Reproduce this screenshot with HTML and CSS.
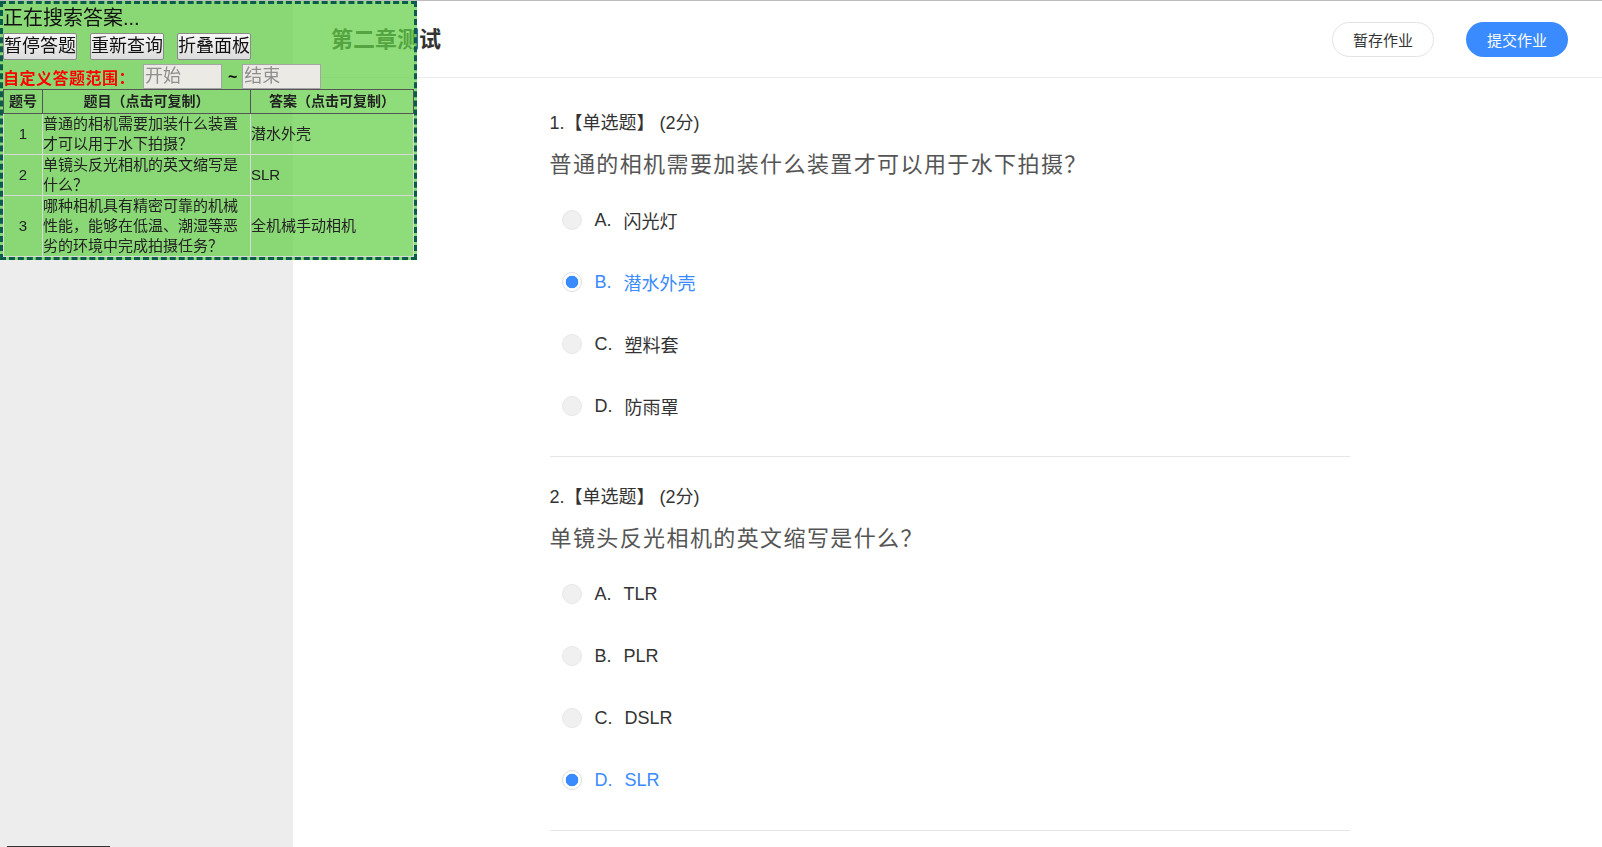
FILE: index.html
```html
<!DOCTYPE html>
<html lang="zh-CN">
<head>
  <meta charset="UTF-8" />
  <meta name="viewport" content="width=device-width, initial-scale=1.0" />
  <title>第二章测试</title>
  <link rel="stylesheet" href="styles.css">
</head>
<body>
  <div class="page">
    <aside class="sidebar">
      <div class="side-tab"></div>
    </aside>

    <div class="main">
      <header class="topbar">
        <h1 class="work-title">第二章测试</h1>
        <div class="topbar-actions">
          <button class="btn-ghost">暂存作业</button>
          <button class="btn-primary">提交作业</button>
        </div>
      </header>

      <main class="paper">
        <div class="question">
          <div class="q-type">1.【单选题】 (2分)</div>
          <div class="q-text">普通的相机需要加装什么装置才可以用于水下拍摄？</div>
          <ul class="options">
            <li class="option"><span class="radio"></span><span class="opt-key">A.</span><span>闪光灯</span></li>
            <li class="option checked"><span class="radio"></span><span class="opt-key">B.</span><span>潜水外壳</span></li>
            <li class="option"><span class="radio"></span><span class="opt-key">C.</span><span>塑料套</span></li>
            <li class="option"><span class="radio"></span><span class="opt-key">D.</span><span>防雨罩</span></li>
          </ul>
        </div>

        <div class="question">
          <div class="q-type">2.【单选题】 (2分)</div>
          <div class="q-text">单镜头反光相机的英文缩写是什么？</div>
          <ul class="options">
            <li class="option"><span class="radio"></span><span class="opt-key">A.</span><span>TLR</span></li>
            <li class="option"><span class="radio"></span><span class="opt-key">B.</span><span>PLR</span></li>
            <li class="option"><span class="radio"></span><span class="opt-key">C.</span><span>DSLR</span></li>
            <li class="option checked"><span class="radio"></span><span class="opt-key">D.</span><span>SLR</span></li>
          </ul>
        </div>
      </main>
    </div>
  </div>

  <div class="helper-panel">
    <div class="status">正在搜索答案...</div>
    <div class="panel-btns">
      <button>暂停答题</button>
      <button>重新查询</button>
      <button>折叠面板</button>
    </div>
    <div class="range-row">
      <span class="range-label">自定义答题范围：</span>
      <input type="text" placeholder="开始">
      <span class="tilde">~</span>
      <input type="text" placeholder="结束">
    </div>
    <table class="answer-table">
      <colgroup>
        <col class="c-no">
        <col class="c-q">
        <col class="c-a">
      </colgroup>
      <thead>
        <tr><th>题号</th><th>题目（点击可复制）</th><th>答案（点击可复制）</th></tr>
      </thead>
      <tbody>
        <tr><td class="no">1</td><td>普通的相机需要加装什么装置才可以用于水下拍摄？</td><td>潜水外壳</td></tr>
        <tr><td class="no">2</td><td>单镜头反光相机的英文缩写是什么？</td><td>SLR</td></tr>
        <tr><td class="no">3</td><td>哪种相机具有精密可靠的机械性能，能够在低温、潮湿等恶劣的环境中完成拍摄任务？</td><td>全机械手动相机</td></tr>
      </tbody>
    </table>
  </div>
</body>
</html>
```

FILE: styles.css
```css
html, body {
  margin: 0;
  padding: 0;
  height: 100%;
  overflow: hidden;
}
body {
  font-family: "Liberation Sans", "Noto Sans CJK SC", sans-serif;
  color: #333;
  background: #fff;
}
.page {
  display: flex;
  height: 847px;
  box-sizing: border-box;
  border-top: 1px solid #bdbdbd;
}
.sidebar {
  width: 293px;
  flex-shrink: 0;
  background: #ededed;
}
.side-tab {
  width: 103px;
  height: 20px;
  margin: 845px 0 0 7px;
  background: #333;
}
.main {
  flex: 1;
  min-width: 0;
}

/* top bar */
.topbar {
  height: 76px;
  display: flex;
  align-items: center;
  justify-content: space-between;
  padding: 0 34px 0 38px;
  border-bottom: 1px solid #ececec;
}
.work-title {
  margin: 0 0 4px;
  font-size: 22px;
  font-weight: bold;
  color: #333;
}
.topbar-actions {
  display: flex;
  gap: 32px;
}
.topbar-actions button {
  width: 102px;
  height: 35px;
  border-radius: 18px;
  font-family: inherit;
  font-size: 15px;
  cursor: pointer;
}
.btn-ghost {
  background: #fff;
  border: 1px solid #e3e3e3;
  color: #333;
}
.btn-primary {
  background: #3a8bff;
  border: none;
  color: #fff;
}

/* questions */
.paper {
  width: 800px;
  margin: 0 auto;
  padding: 5px 0 0 4px;
}
.question {
  padding: 28px 0 19px;
  border-bottom: 1px solid #e6e6e6;
}
.q-type {
  font-size: 18px;
  line-height: 24px;
  color: #333;
}
.q-text {
  margin-top: 14px;
  font-size: 22px;
  line-height: 32px;
  letter-spacing: 1.4px;
  color: #555;
}
.options {
  list-style: none;
  margin: 8px 0 0;
  padding: 0;
}
.option {
  height: 62px;
  display: flex;
  align-items: center;
  padding-left: 12px;
  font-size: 18px;
  color: #333;
}
.radio {
  width: 20px;
  height: 20px;
  box-sizing: border-box;
  border-radius: 50%;
  background: #f0f0f0;
  border: 1px solid #e8e8e8;
  margin-right: 13px;
}
.opt-key {
  margin-right: 12px;
}
.option.checked {
  color: #3a8bff;
}
.option.checked .radio {
  border-color: #dedede;
  background: radial-gradient(circle, #3a8bff 0 6px, #fff 6.6px);
}

/* answer helper panel */
.helper-panel {
  position: fixed;
  top: 1px;
  left: 0;
  width: 411px;
  border: 3px dashed #0b5d4b;
  background: rgba(99, 208, 70, 0.72);
  color: #111;
}
.status {
  font-size: 20px;
  line-height: 29px;
}
.panel-btns {
  display: flex;
  gap: 13px;
}
.panel-btns button {
  height: 27px;
  padding: 0;
  font-family: inherit;
  font-size: 18px;
  line-height: 25px;
  color: #111;
  border: 1px solid #8a8a8a;
  border-radius: 2px;
  background: linear-gradient(#f7f7f7, #dcdcdc);
}
.range-row {
  display: flex;
  align-items: center;
  height: 25px;
  margin-top: 4px;
}
.range-label {
  color: #f00;
  font-weight: bold;
  font-size: 16px;
  letter-spacing: 0.5px;
  margin-right: 8px;
}
.range-row input {
  width: 79px;
  height: 25px;
  box-sizing: border-box;
  padding: 0 1px;
  border: 1px solid #a5a5a5;
  background: #ebeae5;
  font-family: inherit;
  font-size: 18px;
}
.range-row input::placeholder {
  color: #8f8f8f;
}
.tilde {
  margin: 0 5px 0 6px;
  font-weight: bold;
  font-size: 16px;
}
.answer-table {
  width: 100%;
  border-collapse: collapse;
  table-layout: fixed;
  font-size: 15px;
  color: #222;
}
.c-no { width: 39px; }
.c-q { width: 208px; }
.answer-table th {
  font-size: 14px;
  font-weight: bold;
  line-height: 23px;
  padding: 0;
  border: 1px solid #555;
}
.answer-table td {
  line-height: 20px;
  padding: 0;
  border: 1px solid #d9d9d9;
  vertical-align: middle;
}
.answer-table td.no {
  text-align: center;
}
```
